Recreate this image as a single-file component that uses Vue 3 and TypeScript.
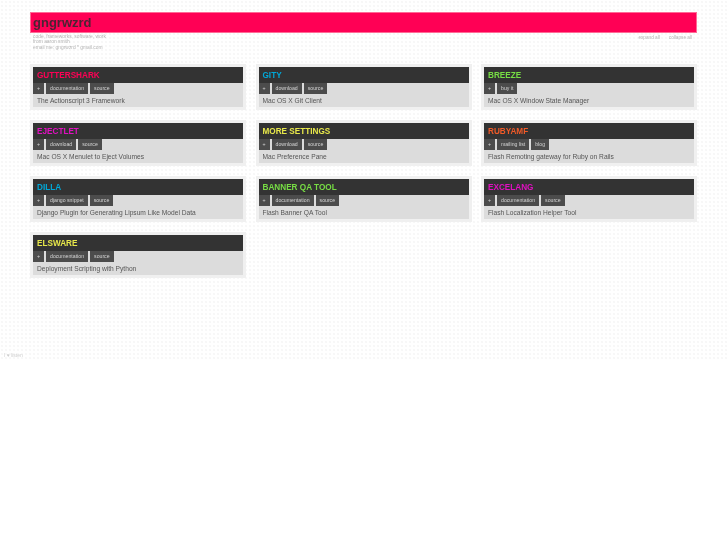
<script setup lang="ts">
interface Project {
  name: string
  color: string
  links: string[]
  text: string
}

const projects: Project[] = [
  { name: 'GUTTERSHARK', color: '#ff0055', links: ['documentation', 'source'], text: 'The Actionscript 3 Framework' },
  { name: 'GITY', color: '#00a8d8', links: ['download', 'source'], text: 'Mac OS X Git Client' },
  { name: 'BREEZE', color: '#77dd44', links: ['buy it'], text: 'Mac OS X Window State Manager' },
  { name: 'EJECTLET', color: '#e010c0', links: ['download', 'source'], text: 'Mac OS X Menulet to Eject Volumes' },
  { name: 'MORE SETTINGS', color: '#e8e84a', links: ['download', 'source'], text: 'Mac Preference Pane' },
  { name: 'RUBYAMF', color: '#f05a28', links: ['mailing list', 'blog'], text: 'Flash Remoting gateway for Ruby on Rails' },
  { name: 'DILLA', color: '#00a8d8', links: ['django snippet', 'source'], text: 'Django Plugin for Generating Lipsum Like Model Data' },
  { name: 'BANNER QA TOOL', color: '#77dd44', links: ['documentation', 'source'], text: 'Flash Banner QA Tool' },
  { name: 'EXCELANG', color: '#e010c0', links: ['documentation', 'source'], text: 'Flash Localization Helper Tool' },
  { name: 'ELSWARE', color: '#e8e84a', links: ['documentation', 'source'], text: 'Deployment Scripting with Python' },
]
</script>

<template>
  <div class="page">
    <div class="textured">
      <header class="banner"><h1>gngrwzrd</h1></header>
      <div class="subhead">
        <div class="about">
          code, frameworks, software, work<br />
          from aaron smith<br />
          email me: gngrwzrd * gmail.com
        </div>
        <div class="controls">
          <span>expand all</span>
          <span>collapse all</span>
        </div>
      </div>
      <main class="grid">
        <section v-for="p in projects" :key="p.name" class="card">
          <h2 :style="{ color: p.color }">{{ p.name }}</h2>
          <div class="tabs">
            <span class="tab toggle">+</span>
            <span v-for="l in p.links" :key="l" class="tab">{{ l }}</span>
          </div>
          <p>{{ p.text }}</p>
        </section>
      </main>
      <footer class="foot">I &#9829; listen</footer>
    </div>
  </div>
</template>

<style>
html, body { margin: 0; background: #fff; }
</style>

<style scoped>
.page {
  width: 727px;
  height: 545px;
  overflow: hidden;
  font-family: "Liberation Sans", Arial, sans-serif;
}
.textured {
  box-sizing: border-box;
  height: 360px;
  padding: 12px 30px 0;
  position: relative;
  background-color: #fff;
  background-image: radial-gradient(#f7f7f7 0.7px, transparent 0.8px);
  background-size: 4px 4px;
  filter: blur(0.4px);
}
.banner {
  height: 19px;
  border: 1px solid #ff6a96;
  background: #ff0055;
  width: 665px;
}
.banner h1 {
  margin: 0;
  padding-left: 2px;
  font-size: 13px;
  line-height: 19px;
  font-weight: bold;
  color: #4a2433;
}
.subhead {
  display: flex;
  justify-content: space-between;
  padding: 1px 5px 0 3px;
  height: 30px;
  font-size: 4.9px;
  line-height: 5.4px;
  color: #b4b4b4;
}
.controls {
  display: flex;
  gap: 9px;
  padding-top: 1px;
  font-size: 4.7px;
}
.grid {
  display: grid;
  grid-template-columns: repeat(3, 216px);
  column-gap: 9.5px;
  row-gap: 10px;
}
.card {
  box-sizing: border-box;
  height: 46px;
  border: 3px solid #f0f0f0;
  background: #dcdcdc;
}
.card h2 {
  margin: 0;
  height: 16px;
  padding-left: 4px;
  background: #333;
  font-size: 8.2px;
  line-height: 17px;
  font-weight: bold;
}
.tabs {
  display: flex;
  gap: 2px;
}
.tab {
  box-sizing: border-box;
  height: 11px;
  padding: 0 4px;
  background: #4c4c4c;
  color: #d4d4d4;
  font-size: 5.2px;
  line-height: 11px;
}
.toggle {
  width: 11px;
  padding: 0;
  text-align: center;
}
.card p {
  margin: 0;
  padding: 2px 0 0 4px;
  font-size: 6.65px;
  line-height: 9px;
  color: #555;
}
.foot {
  position: absolute;
  left: 4px;
  bottom: 2px;
  font-size: 5px;
  color: #cfcfcf;
}
</style>
